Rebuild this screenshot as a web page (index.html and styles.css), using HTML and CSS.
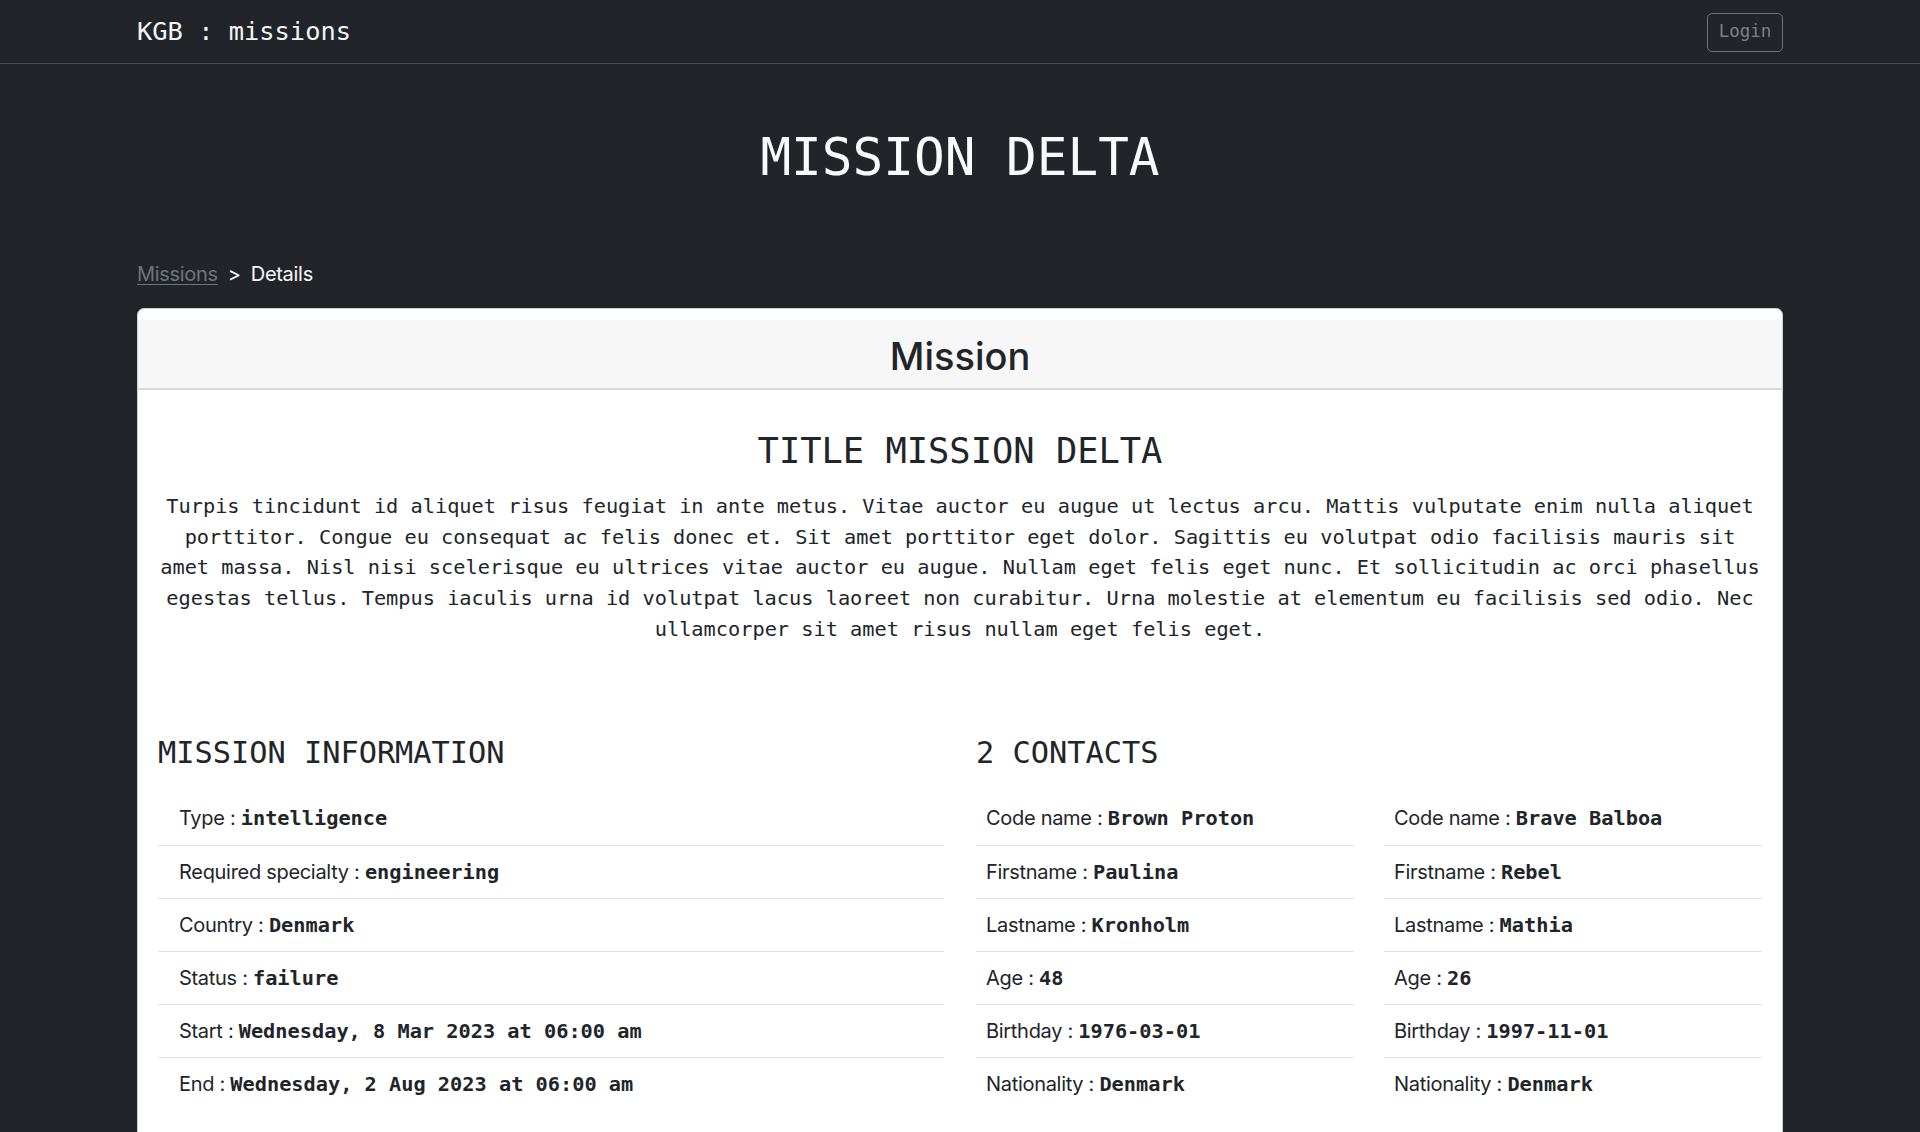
FILE: index.html
```html
<!DOCTYPE html>
<html lang="en">
<head>
<meta charset="utf-8">
<title>KGB : missions</title>
<link rel="stylesheet" href="styles.css">
</head>
<body>
<nav class="navbar">
  <div class="nav-inner">
    <a class="brand" href="#">KGB : missions</a>
    <button class="btn-login" type="button">Login</button>
  </div>
</nav>
<main class="container">
  <h1 class="page-title">MISSION DELTA</h1>
  <div class="breadcrumb">
    <a class="crumb-link" href="#">Missions</a><span class="crumb-sep">&gt;</span><span class="crumb-current">Details</span>
  </div>
  <section class="card">
    <header class="card-header">
      <h2 class="card-title">Mission</h2>
    </header>
    <div class="card-body">
      <h3 class="mission-title">TITLE MISSION DELTA</h3>
      <p class="mission-desc">Turpis tincidunt id aliquet risus feugiat in ante metus. Vitae auctor eu augue ut lectus arcu. Mattis vulputate enim nulla aliquet porttitor. Congue eu consequat ac felis donec et. Sit amet porttitor eget dolor. Sagittis eu volutpat odio facilisis mauris sit amet massa. Nisl nisi scelerisque eu ultrices vitae auctor eu augue. Nullam eget felis eget nunc. Et sollicitudin ac orci phasellus egestas tellus. Tempus iaculis urna id volutpat lacus laoreet non curabitur. Urna molestie at elementum eu facilisis sed odio. Nec ullamcorper sit amet risus nullam eget felis eget.</p>
      <div class="info-grid">
        <div class="info-col">
          <h4 class="section-title">MISSION INFORMATION</h4>
          <ul class="list list-wide">
            <li>Type : <b>intelligence</b></li>
            <li>Required specialty : <b>engineering</b></li>
            <li>Country : <b>Denmark</b></li>
            <li>Status : <b>failure</b></li>
            <li>Start : <b>Wednesday, 8 Mar 2023 at 06:00 am</b></li>
            <li>End : <b>Wednesday, 2 Aug 2023 at 06:00 am</b></li>
          </ul>
        </div>
        <div class="info-col">
          <h4 class="section-title">2 CONTACTS</h4>
          <div class="contacts">
            <ul class="list list-narrow">
              <li>Code name : <b>Brown Proton</b></li>
              <li>Firstname : <b>Paulina</b></li>
              <li>Lastname : <b>Kronholm</b></li>
              <li>Age : <b>48</b></li>
              <li>Birthday : <b>1976-03-01</b></li>
              <li>Nationality : <b>Denmark</b></li>
            </ul>
            <ul class="list list-narrow">
              <li>Code name : <b>Brave Balboa</b></li>
              <li>Firstname : <b>Rebel</b></li>
              <li>Lastname : <b>Mathia</b></li>
              <li>Age : <b>26</b></li>
              <li>Birthday : <b>1997-11-01</b></li>
              <li>Nationality : <b>Denmark</b></li>
            </ul>
          </div>
        </div>
      </div>
    </div>
  </section>
</main>
</body>
</html>
```

FILE: styles.css
```css
* { box-sizing: border-box; }

html, body {
  margin: 0;
  padding: 0;
}

body {
  background: #212529;
  color: #212529;
  font-family: Inter, "Liberation Sans", Arial, sans-serif;
  font-size: 20px;
  line-height: 1.5;
}

.navbar {
  height: 64px;
  border-bottom: 1px solid #474b50;
}

.nav-inner {
  width: 1646px;
  margin: 0 auto;
  height: 63px;
  display: flex;
  align-items: center;
  justify-content: space-between;
}

.brand {
  font-family: "DejaVu Sans Mono", monospace;
  font-size: 25.4px;
  color: #f3f4f5;
  text-decoration: none;
  line-height: 1;
  margin-top: 1px;
}

.btn-login {
  width: 76px;
  height: 39px;
  margin-top: 1px;
  background: transparent;
  border: 1px solid #6c737a;
  border-radius: 5px;
  color: #7b8187;
  font-family: "DejaVu Sans Mono", monospace;
  font-size: 17.5px;
  padding: 0;
  line-height: 1;
}

.container {
  width: 1646px;
  margin: 0 auto;
}

.page-title {
  margin: 0;
  text-align: center;
  font-family: "DejaVu Sans Mono", monospace;
  font-weight: normal;
  font-size: 51px;
  line-height: 61px;
  color: #f8f9fa;
  padding-top: 62.5px;
}

.breadcrumb {
  margin-top: 71.5px;
  height: 30px;
  line-height: 30px;
  font-size: 20px;
  letter-spacing: -0.3px;
  color: #f8f9fa;
}

.crumb-link {
  color: #6f757b;
  text-decoration: underline;
  text-underline-offset: 3px;
  text-decoration-thickness: 1px;
}

.crumb-sep {
  margin: 0 10px 0 10px;
}

.card {
  margin-top: 19px;
  background: #ffffff;
  border: 1px solid #cfd0d1;
  border-radius: 7px;
  padding-top: 11px;
  overflow: hidden;
}

.card-header {
  background: #f7f7f7;
  border-bottom: 2px solid #d9d9d9;
  height: 70px;
  display: flex;
  align-items: center;
  justify-content: center;
}

.card-title {
  margin: 3px 0 0;
  font-family: Inter, "Liberation Sans", Arial, sans-serif;
  font-weight: 500;
  font-size: 38px;
  line-height: 46px;
  color: #212529;
}

.card-body {
  padding: 39.5px 20px 40px;
}

.mission-title {
  margin: 0;
  text-align: center;
  font-family: "DejaVu Sans Mono", monospace;
  font-weight: normal;
  font-size: 35.4px;
  line-height: 42px;
  color: #212529;
}

.mission-desc {
  margin: 19.7px 0 0;
  text-align: center;
  font-family: "DejaVu Sans Mono", monospace;
  font-size: 20.3px;
  line-height: 30.6px;
  color: #212529;
}

.info-grid {
  margin-top: 91.3px;
  display: grid;
  grid-template-columns: 1fr 1fr;
  column-gap: 32px;
}

.section-title {
  margin: 0;
  font-family: "DejaVu Sans Mono", monospace;
  font-weight: normal;
  font-size: 30.3px;
  line-height: 36px;
  color: #212529;
}

.contacts {
  display: grid;
  grid-template-columns: 1fr 1fr;
  column-gap: 30px;
}

.list {
  list-style: none;
  margin: 21px 0 0;
  padding: 0;
}

.list li {
  padding: 11px 0;
  line-height: 30.2px;
  border-bottom: 1px solid #dee2e6;
  font-size: 20px;
  letter-spacing: -0.3px;
  color: #212529;
  white-space: nowrap;
}

.list li:last-child {
  border-bottom: none;
}

.list-wide li {
  padding-left: 21px;
}

.list-narrow li {
  padding-left: 10px;
}

.list b {
  font-family: "DejaVu Sans Mono", monospace;
  font-weight: bold;
  font-size: 20.3px;
  letter-spacing: 0;
}
```
